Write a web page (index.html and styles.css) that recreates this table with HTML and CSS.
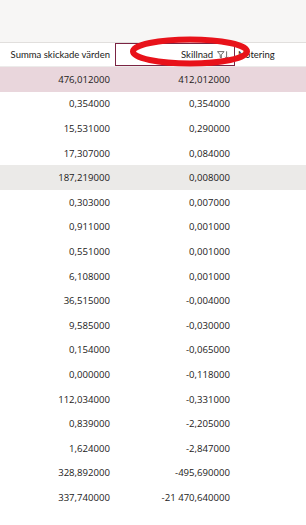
FILE: index.html
```html
<!DOCTYPE html>
<html lang="sv">
<head>
<meta charset="utf-8">
<link rel="stylesheet" href="styles.css">
</head>
<body>
<div class="page">
  <div class="topbar"></div>
  <div class="table">
    <div class="hrow">
      <div class="hcell c1">Summa skickade värden</div>
      <div class="hcell c2 active">Skillnad
        <svg class="ficon" width="12" height="8" viewBox="0 0 12 8"><path d="M0.5 0.6 H7 L4.3 3.8 V7.2 L3.2 6.4 V3.8 Z" fill="none" stroke="#605e5c" stroke-width="0.9" stroke-linejoin="round"/><path d="M9.6 0.3 V7.3 M8.1 5.8 L9.6 7.3 L11.1 5.8" fill="none" stroke="#605e5c" stroke-width="0.9"/></svg>
      </div>
      <div class="hcell c3">Notering</div>
    </div>
    <div class="row pink"><div class="c1">476,012000</div><div class="c2">412,012000</div><div class="c3"></div></div>
    <div class="row"><div class="c1">0,354000</div><div class="c2">0,354000</div><div class="c3"></div></div>
    <div class="row"><div class="c1">15,531000</div><div class="c2">0,290000</div><div class="c3"></div></div>
    <div class="row"><div class="c1">17,307000</div><div class="c2">0,084000</div><div class="c3"></div></div>
    <div class="row grey"><div class="c1">187,219000</div><div class="c2">0,008000</div><div class="c3"></div></div>
    <div class="row"><div class="c1">0,303000</div><div class="c2">0,007000</div><div class="c3"></div></div>
    <div class="row"><div class="c1">0,911000</div><div class="c2">0,001000</div><div class="c3"></div></div>
    <div class="row"><div class="c1">0,551000</div><div class="c2">0,001000</div><div class="c3"></div></div>
    <div class="row"><div class="c1">6,108000</div><div class="c2">0,001000</div><div class="c3"></div></div>
    <div class="row"><div class="c1">36,515000</div><div class="c2">-0,004000</div><div class="c3"></div></div>
    <div class="row"><div class="c1">9,585000</div><div class="c2">-0,030000</div><div class="c3"></div></div>
    <div class="row"><div class="c1">0,154000</div><div class="c2">-0,065000</div><div class="c3"></div></div>
    <div class="row"><div class="c1">0,000000</div><div class="c2">-0,118000</div><div class="c3"></div></div>
    <div class="row"><div class="c1">112,034000</div><div class="c2">-0,331000</div><div class="c3"></div></div>
    <div class="row"><div class="c1">0,839000</div><div class="c2">-2,205000</div><div class="c3"></div></div>
    <div class="row"><div class="c1">1,624000</div><div class="c2">-2,847000</div><div class="c3"></div></div>
    <div class="row"><div class="c1">328,892000</div><div class="c2">-495,690000</div><div class="c3"></div></div>
    <div class="row"><div class="c1">337,740000</div><div class="c2">-21 470,640000</div><div class="c3"></div></div>
  </div>
  <svg class="mark" width="130" height="36" viewBox="0 0 130 36"><ellipse cx="65" cy="17.5" rx="57" ry="12" fill="none" stroke="#e8121a" stroke-width="6"/></svg>
</div>
</body>
</html>
```
FILE: styles.css
```css
html, body {
  margin: 0;
  padding: 0;
  background: #ffffff;
}
.page {
  position: relative;
  width: 306px;
  height: 525px;
  overflow: hidden;
  font-family: "Open Sans", "Noto Sans", sans-serif;
  font-size: 9.6px;
  color: #1b1a19;
}
.topbar {
  height: 42px;
  background: #f7f6f5;
  border-bottom: 1px solid #e1dfdd;
}
.hrow, .row {
  display: grid;
  grid-template-columns: 115px 120px 1fr;
}
.hrow {
  height: 23px;
  border-bottom: 1px solid #ecebea;
}
.hcell {
  display: flex;
  align-items: center;
  height: 23px;
  box-sizing: border-box;
  font-family: Lato, "Open Sans", sans-serif;
  font-size: 9.5px;
  color: #1b1a19;
}
.hcell.c1 {
  justify-content: flex-end;
  padding-right: 5px;
}
.hcell.c2 {
  justify-content: flex-end;
  padding-right: 5px;
  border: 1px solid #7b2443;
  gap: 4px;
}
.hcell.c3 {
  padding-left: 3px;
}
.ficon {
  display: block;
}
.row {
  height: 24.6px;
  align-items: center;
}
.row .c1, .row .c2 {
  text-align: right;
  padding-right: 5px;
}
.row.pink {
  background: #e9d6dc;
}
.row.grey {
  background: #ebeae8;
}
.mark {
  position: absolute;
  left: 125px;
  top: 34px;
}
```
